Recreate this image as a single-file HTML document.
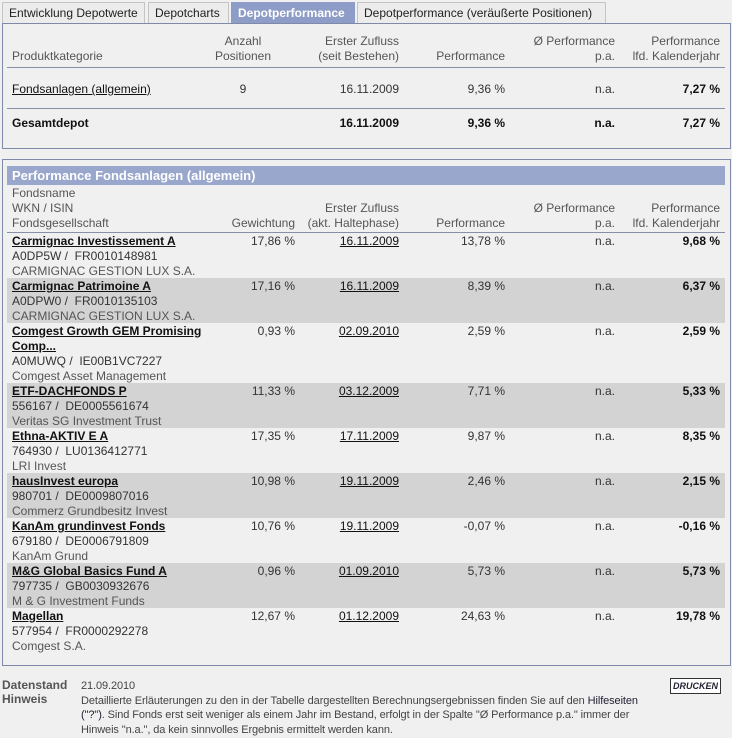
<!DOCTYPE html>
<html><head><meta charset="utf-8"><style>
*{margin:0;padding:0;box-sizing:border-box}
body{width:732px;height:738px;background:#f0f0f0;font-family:"Liberation Sans",Arial,sans-serif;font-size:12px;color:#333;position:relative;overflow:hidden}
.a{position:absolute;white-space:nowrap;line-height:15px}
.r{text-align:right}
.tab{position:absolute;top:2px;height:22px;border:1px solid #c4c4c4;border-bottom:none;background:#ececec;line-height:21px;padding-left:6px;font-size:12px;color:#222}
.box{position:absolute;left:2px;width:729px;border:1px solid #7f8aa8;background:#f0f0f0}
.hl{position:absolute;left:7px;width:718px;height:1px;background:#8890a8}
.g{position:absolute;left:7px;width:718px;background:#d3d3d3}
.h{color:#555}
b{color:#111}
u{color:#111}
.n{font-weight:bold;color:#111;text-decoration:underline}
</style></head><body>
<div class="tab" style="left:2px;width:143px">Entwicklung Depotwerte</div>
<div class="tab" style="left:148px;width:81px">Depotcharts</div>
<div class="tab" style="left:231px;width:124px;background:#8e9dc7;border-color:#8e9dc7;color:#fff;font-weight:bold">Depotperformance</div>
<div class="tab" style="left:357px;width:249px">Depotperformance (veräußerte Positionen)</div>

<div class="box" style="top:23px;height:126px"></div>
<div class="a h" style="left:12px;top:49px">Produktkategorie</div>
<div class="a h r" style="left:193px;width:100px;text-align:center;top:34px">Anzahl<br>Positionen</div>
<div class="a h r" style="right:333px;top:34px">Erster Zufluss<br>(seit Bestehen)</div>
<div class="a h r" style="right:227px;top:49px">Performance</div>
<div class="a h r" style="right:117px;top:34px">Ø Performance<br>p.a.</div>
<div class="a h r" style="right:12px;top:34px">Performance<br>lfd. Kalenderjahr</div>
<div class="hl" style="top:67px"></div>
<div class="a" style="left:12px;top:82px"><u>Fondsanlagen (allgemein)</u></div>
<div class="a" style="left:193px;width:100px;text-align:center;top:82px">9</div>
<div class="a r" style="right:333px;top:82px">16.11.2009</div>
<div class="a r" style="right:227px;top:82px">9,36 %</div>
<div class="a r" style="right:117px;top:82px">n.a.</div>
<div class="a r" style="right:12px;top:82px"><b>7,27 %</b></div>
<div class="hl" style="top:108px"></div>
<div class="a" style="left:12px;top:116px"><b>Gesamtdepot</b></div>
<div class="a r" style="right:333px;top:116px"><b>16.11.2009</b></div>
<div class="a r" style="right:227px;top:116px"><b>9,36 %</b></div>
<div class="a r" style="right:117px;top:116px"><b>n.a.</b></div>
<div class="a r" style="right:12px;top:116px"><b>7,27 %</b></div>

<div class="box" style="top:159px;height:507px"></div>
<div style="position:absolute;left:7px;top:166px;width:718px;height:19px;background:#9aa7cc;color:#fff;font-weight:bold;font-size:13px;line-height:19px;padding-left:5px">Performance Fondsanlagen (allgemein)</div>
<div class="a h" style="left:12px;top:186px">Fondsname<br>WKN / ISIN<br>Fondsgesellschaft</div>
<div class="a h r" style="right:437px;top:216px">Gewichtung</div>
<div class="a h r" style="right:333px;top:201px">Erster Zufluss<br>(akt. Haltephase)</div>
<div class="a h r" style="right:227px;top:216px">Performance</div>
<div class="a h r" style="right:117px;top:201px">Ø Performance<br>p.a.</div>
<div class="a h r" style="right:12px;top:201px">Performance<br>lfd. Kalenderjahr</div>
<div class="hl" style="top:232px"></div>

<div class="g" style="top:278px;height:45px"></div>
<div class="g" style="top:383px;height:45px"></div>
<div class="g" style="top:473px;height:45px"></div>
<div class="g" style="top:563px;height:45px"></div>

<div class="a" style="left:12px;top:234px"><span class="n">Carmignac Investissement A</span><br>A0DP5W / &nbsp;FR0010148981<br><span class="h">CARMIGNAC GESTION LUX S.A.</span></div>
<div class="a r" style="right:437px;top:234px">17,86 %</div><div class="a r" style="right:333px;top:234px"><u>16.11.2009</u></div><div class="a r" style="right:227px;top:234px">13,78 %</div><div class="a r" style="right:117px;top:234px">n.a.</div><div class="a r" style="right:12px;top:234px"><b>9,68 %</b></div>

<div class="a" style="left:12px;top:279px"><span class="n">Carmignac Patrimoine A</span><br>A0DPW0 / &nbsp;FR0010135103<br><span class="h">CARMIGNAC GESTION LUX S.A.</span></div>
<div class="a r" style="right:437px;top:279px">17,16 %</div><div class="a r" style="right:333px;top:279px"><u>16.11.2009</u></div><div class="a r" style="right:227px;top:279px">8,39 %</div><div class="a r" style="right:117px;top:279px">n.a.</div><div class="a r" style="right:12px;top:279px"><b>6,37 %</b></div>

<div class="a" style="left:12px;top:324px"><span class="n">Comgest Growth GEM Promising</span><br><span class="n">Comp...</span><br>A0MUWQ / &nbsp;IE00B1VC7227<br><span class="h">Comgest Asset Management</span></div>
<div class="a r" style="right:437px;top:324px">0,93 %</div><div class="a r" style="right:333px;top:324px"><u>02.09.2010</u></div><div class="a r" style="right:227px;top:324px">2,59 %</div><div class="a r" style="right:117px;top:324px">n.a.</div><div class="a r" style="right:12px;top:324px"><b>2,59 %</b></div>

<div class="a" style="left:12px;top:384px"><span class="n">ETF-DACHFONDS P</span><br>556167 / &nbsp;DE0005561674<br><span class="h">Veritas SG Investment Trust</span></div>
<div class="a r" style="right:437px;top:384px">11,33 %</div><div class="a r" style="right:333px;top:384px"><u>03.12.2009</u></div><div class="a r" style="right:227px;top:384px">7,71 %</div><div class="a r" style="right:117px;top:384px">n.a.</div><div class="a r" style="right:12px;top:384px"><b>5,33 %</b></div>

<div class="a" style="left:12px;top:429px"><span class="n">Ethna-AKTIV E A</span><br>764930 / &nbsp;LU0136412771<br><span class="h">LRI Invest</span></div>
<div class="a r" style="right:437px;top:429px">17,35 %</div><div class="a r" style="right:333px;top:429px"><u>17.11.2009</u></div><div class="a r" style="right:227px;top:429px">9,87 %</div><div class="a r" style="right:117px;top:429px">n.a.</div><div class="a r" style="right:12px;top:429px"><b>8,35 %</b></div>

<div class="a" style="left:12px;top:474px"><span class="n">hausInvest europa</span><br>980701 / &nbsp;DE0009807016<br><span class="h">Commerz Grundbesitz Invest</span></div>
<div class="a r" style="right:437px;top:474px">10,98 %</div><div class="a r" style="right:333px;top:474px"><u>19.11.2009</u></div><div class="a r" style="right:227px;top:474px">2,46 %</div><div class="a r" style="right:117px;top:474px">n.a.</div><div class="a r" style="right:12px;top:474px"><b>2,15 %</b></div>

<div class="a" style="left:12px;top:519px"><span class="n">KanAm grundinvest Fonds</span><br>679180 / &nbsp;DE0006791809<br><span class="h">KanAm Grund</span></div>
<div class="a r" style="right:437px;top:519px">10,76 %</div><div class="a r" style="right:333px;top:519px"><u>19.11.2009</u></div><div class="a r" style="right:227px;top:519px">-0,07 %</div><div class="a r" style="right:117px;top:519px">n.a.</div><div class="a r" style="right:12px;top:519px"><b>-0,16 %</b></div>

<div class="a" style="left:12px;top:564px"><span class="n">M&amp;G Global Basics Fund A</span><br>797735 / &nbsp;GB0030932676<br><span class="h">M &amp; G Investment Funds</span></div>
<div class="a r" style="right:437px;top:564px">0,96 %</div><div class="a r" style="right:333px;top:564px"><u>01.09.2010</u></div><div class="a r" style="right:227px;top:564px">5,73 %</div><div class="a r" style="right:117px;top:564px">n.a.</div><div class="a r" style="right:12px;top:564px"><b>5,73 %</b></div>

<div class="a" style="left:12px;top:609px"><span class="n">Magellan</span><br>577954 / &nbsp;FR0000292278<br><span class="h">Comgest S.A.</span></div>
<div class="a r" style="right:437px;top:609px">12,67 %</div><div class="a r" style="right:333px;top:609px"><u>01.12.2009</u></div><div class="a r" style="right:227px;top:609px">24,63 %</div><div class="a r" style="right:117px;top:609px">n.a.</div><div class="a r" style="right:12px;top:609px"><b>19,78 %</b></div>

<div class="a" style="left:2px;top:678px;font-weight:bold;color:#555;line-height:14px">Datenstand<br>Hinweis</div>
<div class="a" style="left:81px;top:679px;font-size:11px;line-height:14.5px;color:#444;letter-spacing:-0.1px">21.09.2010<br>Detaillierte Erläuterungen zu den in der Tabelle dargestellten Berechnungsergebnissen finden Sie auf den <span style="color:#223">Hilfeseiten</span><br><span style="color:#223">("?")</span>. Sind Fonds erst seit weniger als einem Jahr im Bestand, erfolgt in der Spalte "Ø Performance p.a." immer der<br>Hinweis "n.a.", da kein sinnvolles Ergebnis ermittelt werden kann.</div>
<div style="position:absolute;left:670px;top:678px;width:51px;height:16px;border:1px solid #333;background:#fff;font-size:9px;font-weight:bold;font-style:italic;color:#223;text-align:center;line-height:14px">DRUCKEN</div>
</body></html>
